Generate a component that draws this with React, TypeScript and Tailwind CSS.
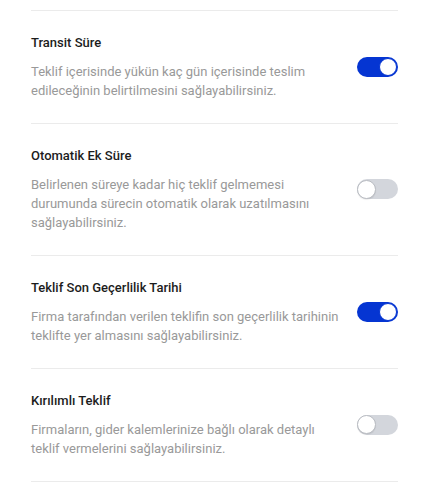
import React from "react";

type Item = { title: string; desc: string; on: boolean };

const items: Item[] = [
  {
    title: "Transit Süre",
    desc: "Teklif içerisinde yükün kaç gün içerisinde teslim edileceğinin belirtilmesini sağlayabilirsiniz.",
    on: true,
  },
  {
    title: "Otomatik Ek Süre",
    desc: "Belirlenen süreye kadar hiç teklif gelmemesi durumunda sürecin otomatik olarak uzatılmasını sağlayabilirsiniz.",
    on: false,
  },
  {
    title: "Teklif Son Geçerlilik Tarihi",
    desc: "Firma tarafından verilen teklifin son geçerlilik tarihinin teklifte yer almasını sağlayabilirsiniz.",
    on: true,
  },
  {
    title: "Kırılımlı Teklif",
    desc: "Firmaların, gider kalemlerinize bağlı olarak detaylı teklif vermelerini sağlayabilirsiniz.",
    on: false,
  },
];

function Toggle({ on }: { on: boolean }) {
  return on ? (
    <div className="relative h-[20px] w-[41px] shrink-0 rounded-full bg-[#0535d2]">
      <div className="absolute right-[1px] top-[1px] h-[18px] w-[18px] rounded-full border border-[#0535d2] bg-white" />
    </div>
  ) : (
    <div className="relative h-[20px] w-[41px] shrink-0 rounded-full bg-[#d3d6dc]">
      <div className="absolute left-0 top-[0.5px] h-[19px] w-[19px] rounded-full border border-[#b9bcc2] bg-white shadow-[0_1px_1px_rgba(0,0,0,0.08)]" />
    </div>
  );
}

export default function App() {
  return (
    <div
      className="min-h-[492px] w-[438px] bg-white pt-[10px]"
      style={{ fontFamily: "Roboto, 'Liberation Sans', sans-serif" }}
    >
      <div className="ml-[31px] w-[367px] border-t border-[#ebebeb]">
        {items.map((it) => (
          <div
            key={it.title}
            className="flex items-center border-b border-[#ebebeb] pb-[23px] pt-[22px]"
          >
            <div className="w-[312px]">
              <div className="text-[13px] font-medium leading-5 text-[#1c1c1c]">
                {it.title}
              </div>
              <div className="mt-[9px] text-[13px] leading-[19px] text-[#999999]">
                {it.desc}
              </div>
            </div>
            <div className="ml-auto">
              <Toggle on={it.on} />
            </div>
          </div>
        ))}
      </div>
    </div>
  );
}
